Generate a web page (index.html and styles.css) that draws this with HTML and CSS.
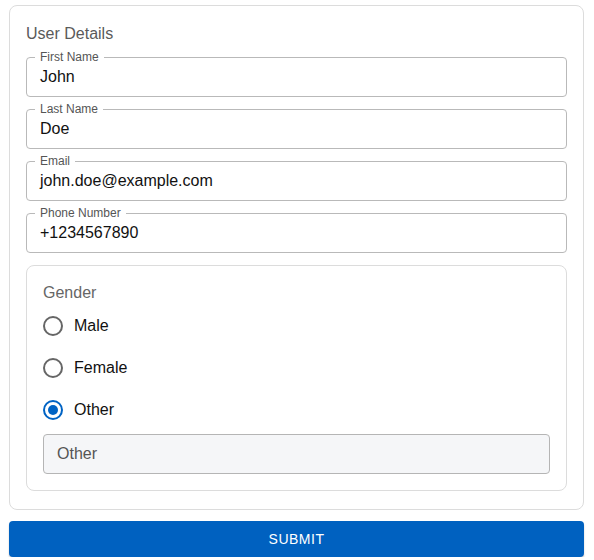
FILE: index.html
```html
<!DOCTYPE html>
<html>
<head>
<meta charset="utf-8">
<link rel="stylesheet" href="styles.css">
</head>
<body>
<div class="page">
  <form class="card">
    <div class="title">User Details</div>
    <div class="field"><span class="label">First Name</span><div class="value">John</div></div>
    <div class="field"><span class="label">Last Name</span><div class="value">Doe</div></div>
    <div class="field"><span class="label">Email</span><div class="value">john.doe@example.com</div></div>
    <div class="field"><span class="label">Phone Number</span><div class="value">+1234567890</div></div>
    <div class="group">
      <div class="group-title">Gender</div>
      <div class="radio-row"><span class="radio"></span><span>Male</span></div>
      <div class="radio-row"><span class="radio"></span><span>Female</span></div>
      <div class="radio-row"><span class="radio checked"></span><span>Other</span></div>
      <div class="other-input">Other</div>
    </div>
  </form>
  <button class="submit" type="button">Submit</button>
</div>
</body>
</html>
```
FILE: styles.css
```css
* { box-sizing: border-box; }
html, body { margin: 0; padding: 0; background: #fff; }
body { font-family: "Liberation Sans", Arial, sans-serif; color: #000; }
.page { padding: 5px 10px 0 9px; display: flex; flex-direction: column; gap: 11px; }
.card {
  border: 1px solid #dcdcdc;
  border-radius: 8px;
  padding: 16px 16px 18px 16px;
  display: flex;
  flex-direction: column;
  gap: 12px;
}
.title { font-size: 16px; line-height: 23px; color: #5a5a5a; }
.field {
  position: relative;
  height: 40px;
  border: 1px solid #b9b9b9;
  border-radius: 4px;
  padding: 0 13px;
  display: flex;
  align-items: center;
}
.label {
  position: absolute;
  left: 8px;
  top: -8px;
  background: #fff;
  padding: 0 5px;
  font-size: 12px;
  line-height: 14px;
  color: #555;
}
.value { font-size: 16px; color: #111; padding-bottom: 1px; }
.group {
  border: 1px solid #dcdcdc;
  border-radius: 8px;
  padding: 15px 16px 16px 16px;
  display: flex;
  flex-direction: column;
}
.group-title { font-size: 16px; line-height: 24px; color: #666; }
.radio-row {
  height: 42px;
  display: flex;
  align-items: center;
  gap: 11px;
  font-size: 16px;
  color: #111;
}
.radio {
  width: 20px;
  height: 20px;
  border-radius: 50%;
  border: 2px solid #666;
  display: flex;
  align-items: center;
  justify-content: center;
}
.radio.checked { border-color: #0063c4; }
.radio.checked::after {
  content: "";
  width: 10px;
  height: 10px;
  border-radius: 50%;
  background: #0063c4;
}
.other-input {
  margin-top: 3px;
  height: 40px;
  background: #f5f6f8;
  border: 1px solid #b5b5b5;
  border-radius: 4px;
  padding: 0 13px 1px 13px;
  display: flex;
  align-items: center;
  font-size: 16px;
  color: #555;
}
.submit {
  height: 36px;
  border: none;
  border-radius: 4px;
  background: #0061c0;
  color: #fff;
  font-family: "Liberation Sans", Arial, sans-serif;
  font-size: 14px;
  text-transform: uppercase;
  letter-spacing: 0.5px;
  box-shadow: 0 2px 2px rgba(0,0,0,0.2);
}
```
